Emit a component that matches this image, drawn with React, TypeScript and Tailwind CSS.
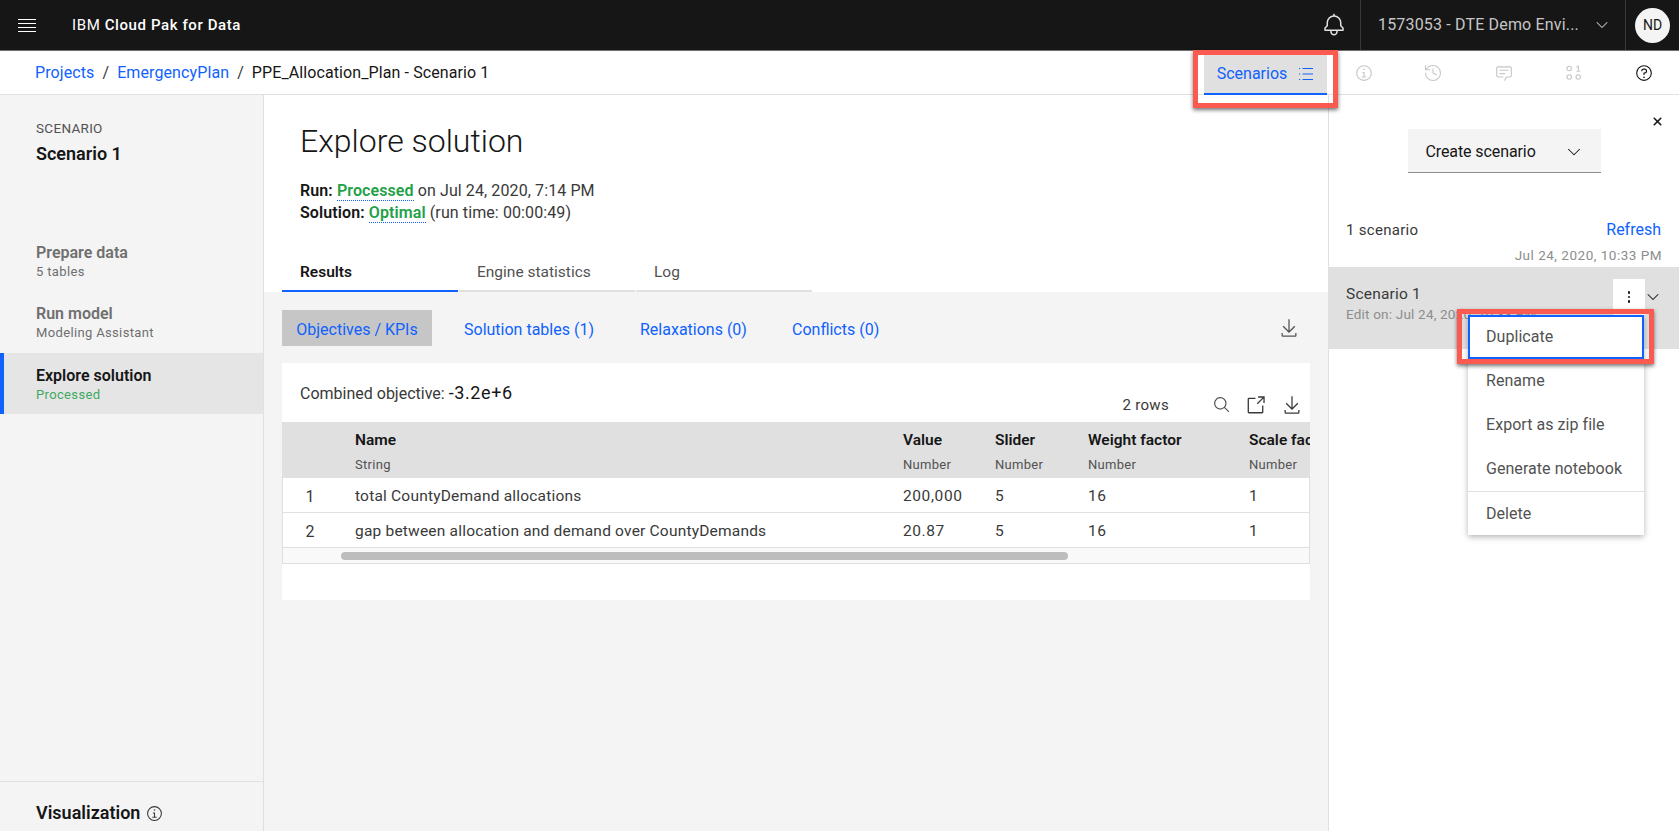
import { ChevronDown, History, X } from "lucide-react";

const cols = [
  { name: "Value", type: "Number", w: "w-[92px]" },
  { name: "Slider", type: "Number", w: "w-[93px]" },
  { name: "Weight factor", type: "Number", w: "w-[161px]" },
  { name: "Scale factor", type: "Number", w: "w-[110px]" },
];

const rows = [
  { n: "1", name: "total CountyDemand allocations", vals: ["200,000", "5", "16", "1"] },
  { n: "2", name: "gap between allocation and demand over CountyDemands", vals: ["20.87", "5", "16", "1"] },
];

function Carbon({ d, size = 20, className = "" }: { d: string[]; size?: number; className?: string }) {
  return (
    <svg width={size} height={size} viewBox="0 0 32 32" fill="currentColor" className={className}>
      {d.map((p) => (
        <path key={p} d={p} />
      ))}
    </svg>
  );
}

const bell = [
  "M28.707 19.293 26 16.586V13a10.014 10.014 0 0 0-9-9.95V1h-2v2.05A10.014 10.014 0 0 0 6 13v3.586l-2.707 2.707A1 1 0 0 0 3 20v3a1 1 0 0 0 1 1h7v.777a5.152 5.152 0 0 0 4.5 5.199A5.006 5.006 0 0 0 21 25v-1h7a1 1 0 0 0 1-1v-3a1 1 0 0 0-.293-.707zM19 25a3 3 0 0 1-6 0v-1h6zm8-3H5v-1.586l2.707-2.707A1 1 0 0 0 8 17v-4a8 8 0 0 1 16 0v4a1 1 0 0 0 .293.707L27 20.414z",
];
const download = [
  "M26 24v4H6v-4H4v4a2 2 0 0 0 2 2h20a2 2 0 0 0 2-2v-4zm0-10-1.41-1.41L17 20.17V2h-2v18.17l-7.59-7.58L6 14l10 10 10-10z",
];
const launch = [
  "M26 28H6a2.002 2.002 0 0 1-2-2V6a2.002 2.002 0 0 1 2-2h10v2H6v20h20V16h2v10a2.002 2.002 0 0 1-2 2Z",
  "M20 2v2h6.586L18 12.586 19.414 14 28 5.414V12h2V2H20z",
];
const search = [
  "M29 27.586l-7.552-7.552a11.018 11.018 0 1 0-1.414 1.414L27.586 29zM4 13a9 9 0 1 1 9 9 9.01 9.01 0 0 1-9-9z",
];
const info = [
  "M17 22v-8h-4v2h2v6h-3v2h8v-2h-3z",
  "M16 8a1.5 1.5 0 1 0 1.5 1.5A1.5 1.5 0 0 0 16 8z",
  "M16 30a14 14 0 1 1 14-14 14 14 0 0 1-14 14zm0-26a12 12 0 1 0 12 12A12 12 0 0 0 16 4z",
];
const help = [
  "M16 2a14 14 0 1 0 14 14A14 14 0 0 0 16 2zm0 26a12 12 0 1 1 12-12 12 12 0 0 1-12 12z",
  "M16 22a1.5 1.5 0 1 0 1.5 1.5A1.5 1.5 0 0 0 16 22z",
  "M17 8h-1.5a4.49 4.49 0 0 0-4.5 4.5v.5h2v-.5a2.5 2.5 0 0 1 2.5-2.5H17a2.5 2.5 0 0 1 0 5h-2v4.5h2V17a4.5 4.5 0 0 0 0-9z",
];
const chat = [
  "M17.74 30 16 29l4-7h6a2 2 0 0 0 2-2V8a2 2 0 0 0-2-2H6a2 2 0 0 0-2 2v12a2 2 0 0 0 2 2h9v2H6a4 4 0 0 1-4-4V8a4 4 0 0 1 4-4h20a4 4 0 0 1 4 4v12a4 4 0 0 1-4 4h-4.84Z",
  "M8 10h16v2H8zM8 16h10v2H8z",
];

function ListIcon() {
  return (
    <svg width="16" height="16" viewBox="0 0 16 16" fill="currentColor">
      <rect x="4.5" y="2" width="10.5" height="1" />
      <rect x="4.5" y="7.5" width="10.5" height="1" />
      <rect x="4.5" y="13" width="10.5" height="1" />
      <rect x="1" y="2" width="1.2" height="1" />
      <rect x="1" y="7.5" width="1.2" height="1" />
      <rect x="1" y="13" width="1.2" height="1" />
    </svg>
  );
}

function ModelIcon() {
  return (
    <svg width="16" height="16" viewBox="0 0 16 16" fill="none" stroke="currentColor" strokeWidth="1.1">
      <circle cx="3.2" cy="3.5" r="2.2" />
      <circle cx="3.2" cy="12" r="2.2" />
      <circle cx="12.2" cy="12" r="2.2" />
      <path d="M10.5 2.2 12.4 1.2v5M10.5 6.2h3.8" />
    </svg>
  );
}

function HighlightBox({ className }: { className: string }) {
  return (
    <div className={`pointer-events-none absolute border-[5px] border-[#fa5a50] shadow-[0_2px_4px_rgba(0,0,0,0.55)] ${className}`} />
  );
}

function SideStep({ title, sub }: { title: string; sub: string }) {
  return (
    <div className="h-[61px] pl-[36px] pt-[12px]">
      <div className="text-[16px] font-semibold leading-[20px] text-[#6f6f6f]">{title}</div>
      <div className="text-[13px] leading-[18px] tracking-[0.35px] text-[#6f6f6f]">{sub}</div>
    </div>
  );
}

export default function App() {
  return (
    <div className="relative flex h-[831px] w-[1679px] flex-col overflow-hidden bg-white font-['Roboto',sans-serif] text-[#161616]">
      {/* top bar */}
      <header className="flex h-[51px] shrink-0 items-center border-b border-[#6f6f6f] bg-[#161616]">
        <div className="flex w-[72px] shrink-0 justify-center pr-[18px]">
          <div className="flex w-[18px] flex-col gap-[3px]">
            <div className="h-[1px] bg-white" />
            <div className="h-[1px] bg-white" />
            <div className="h-[1px] bg-white" />
            <div className="h-[1px] bg-white" />
          </div>
        </div>
        <div className="text-[15px] tracking-[0.6px] text-white">
          IBM <span className="font-medium">Cloud Pak for Data</span>
        </div>
        <div className="flex-1" />
        <Carbon d={bell} size={24} className="mr-[14px] text-[#e0e0e0]" />
        <div className="flex h-[50px] w-[266px] items-center border-x border-[#393939] pl-[17px]">
          <span className="text-[16px] tracking-[0.17px] text-[#c6c6c6]">1573053 - DTE Demo Envi...</span>
          <ChevronDown size={20} strokeWidth={1.25} className="ml-[13px] text-[#c6c6c6]" />
        </div>
        <div className="ml-[9px] mr-[9px] flex h-[35px] w-[35px] items-center justify-center rounded-full bg-[#f4f4f4] text-[14px] text-[#161616]">
          ND
        </div>
      </header>

      {/* breadcrumb bar */}
      <div className="flex h-[44px] shrink-0 items-center border-b border-[#e0e0e0]">
        <div className="flex flex-1 items-center pl-[35px] pt-[1px] text-[16px] tracking-[0.1px]">
          <span className="text-[#0f62fe]">Projects</span>
          <span className="mx-[8px] text-[#393939]">/</span>
          <span className="text-[#0f62fe]">EmergencyPlan</span>
          <span className="mx-[8px] text-[#393939]">/</span>
          <span>PPE_Allocation_Plan - Scenario 1</span>
        </div>
        <div className="flex h-[44px] w-[123px] items-center justify-center gap-[11px] self-start border-b-2 border-[#0f62fe] bg-[#e0e0e0] pt-[4px] text-[16px] text-[#0f62fe]">
          Scenarios
          <ListIcon />
        </div>
        <div className="flex w-[352px] items-center pt-[1px] text-[#c6c6c6]">
          <div className="flex w-[71px] justify-center pl-[3px]"><Carbon d={info} size={18} /></div>
          <div className="flex w-[71px] justify-center"><History size={20} strokeWidth={1.25} /></div>
          <div className="flex w-[71px] justify-center"><Carbon d={chat} size={18} /></div>
          <div className="flex w-[70px] justify-center"><ModelIcon /></div>
          <div className="flex w-[71px] justify-center text-[#161616]"><Carbon d={help} size={18} /></div>
        </div>
      </div>

      <div className="flex min-h-0 flex-1">
        {/* left sidebar */}
        <aside className="flex w-[264px] shrink-0 flex-col border-r border-[#e0e0e0] bg-[#f4f4f4]">
          <div className="pl-[36px] pt-[24px]">
            <div className="text-[13.5px] leading-[18px] tracking-[0.3px] text-[#525252]">SCENARIO</div>
            <div className="mt-[5px] text-[18px] font-semibold leading-[24px]">Scenario 1</div>
          </div>
          <div className="mt-[65px]">
            <SideStep title="Prepare data" sub="5 tables" />
            <SideStep title="Run model" sub="Modeling Assistant" />
            <div className="flex h-[61px] border-l-[4px] border-[#0f62fe] bg-[#e5e5e5] pl-[32px] pt-[13px]">
              <div>
                <div className="text-[16px] font-semibold leading-[20px]">Explore solution</div>
                <div className="text-[13px] leading-[18px] tracking-[0.35px] text-[#3fa864]">Processed</div>
              </div>
            </div>
          </div>
          <div className="flex-1" />
          <div className="flex h-[50px] items-start gap-[6px] border-t border-[#e0e0e0] pl-[36px] pt-[19px]">
            <span className="text-[18px] font-semibold leading-[24px]">Visualization</span>
            <Carbon d={info} size={17} className="mt-[4px] text-[#393939]" />
          </div>
        </aside>

        {/* main */}
        <main className="flex w-[1064px] shrink-0 flex-col">
          <div className="h-[197px] shrink-0 pl-[36px] pt-[23px]">
            <h1 className="text-[32px] font-light leading-[46px]">Explore solution</h1>
            <div className="mt-[16px] text-[16px] leading-[22px] tracking-[0.1px] text-[#393939]">
              <div>
                <span className="font-semibold text-[#161616]">Run:</span>{" "}
                <span className="border-b border-dotted border-[#0f62fe] font-semibold text-[#24a148]">Processed</span>{" "}
                on Jul 24, 2020, 7:14 PM
              </div>
              <div>
                <span className="font-semibold text-[#161616]">Solution:</span>{" "}
                <span className="border-b border-dotted border-[#0f62fe] font-semibold text-[#24a148]">Optimal</span>{" "}
                (run time: 00:00:49)
              </div>
            </div>
            <div className="ml-[-18px] mt-[38px] flex text-[15.5px] leading-[20px] text-[#525252]">
              <div className="h-[30px] w-[176px] border-b-2 border-[#0f62fe] pl-[18px] font-semibold text-[#161616]">Results</div>
              <div className="ml-[1px] h-[30px] w-[176px] border-b-2 border-[#e0e0e0] pl-[18px]">Engine statistics</div>
              <div className="ml-[1px] h-[30px] w-[176px] border-b-2 border-[#e0e0e0] pl-[18px]">Log</div>
            </div>
          </div>

          <div className="flex-1 bg-[#f4f4f4] px-[18px] pt-[18px]">
            <div className="flex h-[36px] items-center text-[16px] text-[#0f62fe]">
              <div className="flex h-[36px] w-[150px] items-center justify-center bg-[#c6c6c6] pt-[4px]">Objectives / KPIs</div>
              <div className="ml-[32px] w-[176px] pt-[4px]">Solution tables (1)</div>
              <div className="w-[152px] pt-[4px]">Relaxations (0)</div>
              <div className="pt-[4px]">Conflicts (0)</div>
              <div className="flex-1" />
              <Carbon d={download} size={20} className="mr-[11px] text-[#525252]" />
            </div>

            <div className="mt-[17px] h-[237px] w-[1028px] bg-white">
              <div className="flex h-[59px]">
                <div className="pl-[18px] pt-[19px] text-[16px] leading-[22px] text-[#393939]">
                  Combined objective: <span className="text-[18px] tracking-[0.6px] text-[#161616]">-3.2e+6</span>
                </div>
                <div className="flex-1" />
                <div className="flex items-center pr-[8px] pt-[25px] text-[#393939]">
                  <span className="mr-[44px] text-[15px] tracking-[0.3px]">2 rows</span>
                  <Carbon d={search} size={18} className="mr-[14px] text-[#525252]" />
                  <Carbon d={launch} size={21} className="mr-[16px]" />
                  <Carbon d={download} size={20} />
                </div>
              </div>

              <div className="overflow-hidden">
                <div className="flex h-[56px] w-[1028px] overflow-hidden bg-[#e0e0e0]">
                  <div className="w-[73px] shrink-0" />
                  <div className="w-[548px] shrink-0 pt-[8px]">
                    <div className="text-[15.5px] font-semibold leading-[20px]">Name</div>
                    <div className="mt-[6px] text-[13px] leading-[18px] tracking-[0.3px] text-[#525252]">String</div>
                  </div>
                  {cols.map((c) => (
                    <div key={c.name} className={`${c.w} shrink-0 whitespace-nowrap pt-[8px]`}>
                      <div className="text-[15.5px] font-semibold leading-[20px]">{c.name}</div>
                      <div className="mt-[6px] text-[13px] leading-[18px] tracking-[0.3px] text-[#525252]">{c.type}</div>
                    </div>
                  ))}
                </div>
                {rows.map((r) => (
                  <div key={r.n} className="flex h-[35px] items-center border-x border-b border-[#e0e0e0] pt-[3px] text-[15.5px] tracking-[0.2px] text-[#393939]">
                    <div className="w-[72px] shrink-0 pr-[18px] text-center text-[16px]">{r.n}</div>
                    <div className="w-[548px] shrink-0">{r.name}</div>
                    {r.vals.map((v, i) => (
                      <div key={i} className={`${cols[i].w} shrink-0 tracking-[0.6px]`}>{v}</div>
                    ))}
                  </div>
                ))}
                <div className="flex h-[16px] items-center border-x border-b border-[#e0e0e0] bg-[#f9f9f9] pl-[58px] pt-[1px]">
                  <div className="h-[8px] w-[727px] rounded-full bg-[#bdbdbd]" />
                </div>
              </div>
            </div>
          </div>
        </main>

        {/* right panel */}
        <aside className="flex flex-1 flex-col border-l border-[#e0e0e0]">
          <div className="flex h-[27px] shrink-0 justify-end pr-[15px] pt-[20px]">
            <X size={13} strokeWidth={3} className="text-[#161616]" />
          </div>
          <div className="flex justify-center pt-[7px]">
            <div className="flex h-[44px] w-[193px] items-center justify-between border-b border-[#8d8d8d] bg-[#f4f4f4] pl-[18px] pr-[16px] pt-[2px] text-[16px] tracking-[-0.1px]">
              Create scenario
              <ChevronDown size={22} strokeWidth={1.1} />
            </div>
          </div>
          <div className="flex items-center justify-between pl-[17px] pr-[18px] pt-[47px] text-[15px] leading-[20px] tracking-[0.3px] text-[#393939]">
            <span>1 scenario</span>
            <span className="text-[16px] tracking-normal text-[#0f62fe]">Refresh</span>
          </div>
          <div className="pr-[17px] pt-[6px] text-right text-[13.5px] leading-[18px] tracking-[0.5px] text-[#8d8d8d]">Jul 24, 2020, 10:33 PM</div>
          <div className="mt-[3px] flex h-[82px] items-start justify-between bg-[#e0e0e0] pl-[17px]">
            <div className="pt-[16px]">
              <div className="text-[15.5px] leading-[22px] tracking-[0.2px] text-[#393939]">Scenario 1</div>
              <div className="text-[13.5px] leading-[18px] tracking-[0.2px] text-[#8d8d8d]">Edit on: Jul 24, 2020, 10:33 PM</div>
            </div>
            <div className="mr-[16px] mt-[12px] flex items-start">
              <div className="mr-[-2px] flex h-[36px] w-[32px] flex-col items-center gap-[2px] bg-white pt-[12px]">
                <div className="h-[2.5px] w-[2.5px] rounded-full bg-[#161616]" />
                <div className="h-[2.5px] w-[2.5px] rounded-full bg-[#161616]" />
                <div className="h-[2.5px] w-[2.5px] rounded-full bg-[#161616]" />
              </div>
              <ChevronDown size={20} strokeWidth={1.25} className="mt-[8px]" />
            </div>
          </div>
        </aside>
      </div>

      {/* overflow menu */}
      <div className="absolute left-[1468px] top-[315px] w-[176px] bg-white text-[16px] tracking-[0.05px] text-[#525252] shadow-[0_2px_6px_rgba(0,0,0,0.3)]">
        <div className="flex h-[44px] items-center border-2 border-[#0f62fe] pl-[16px]">Duplicate</div>
        <div className="flex h-[44px] items-center pl-[18px]">Rename</div>
        <div className="flex h-[44px] items-center pl-[18px]">Export as zip file</div>
        <div className="flex h-[44px] items-center pl-[18px]">Generate notebook</div>
        <div className="flex h-[44px] items-center border-t border-[#e0e0e0] pl-[18px]">Delete</div>
      </div>

      <HighlightBox className="left-[1193px] top-[50px] h-[58px] w-[145px]" />
      <HighlightBox className="left-[1457px] top-[309px] h-[55px] w-[197px]" />
    </div>
  );
}
